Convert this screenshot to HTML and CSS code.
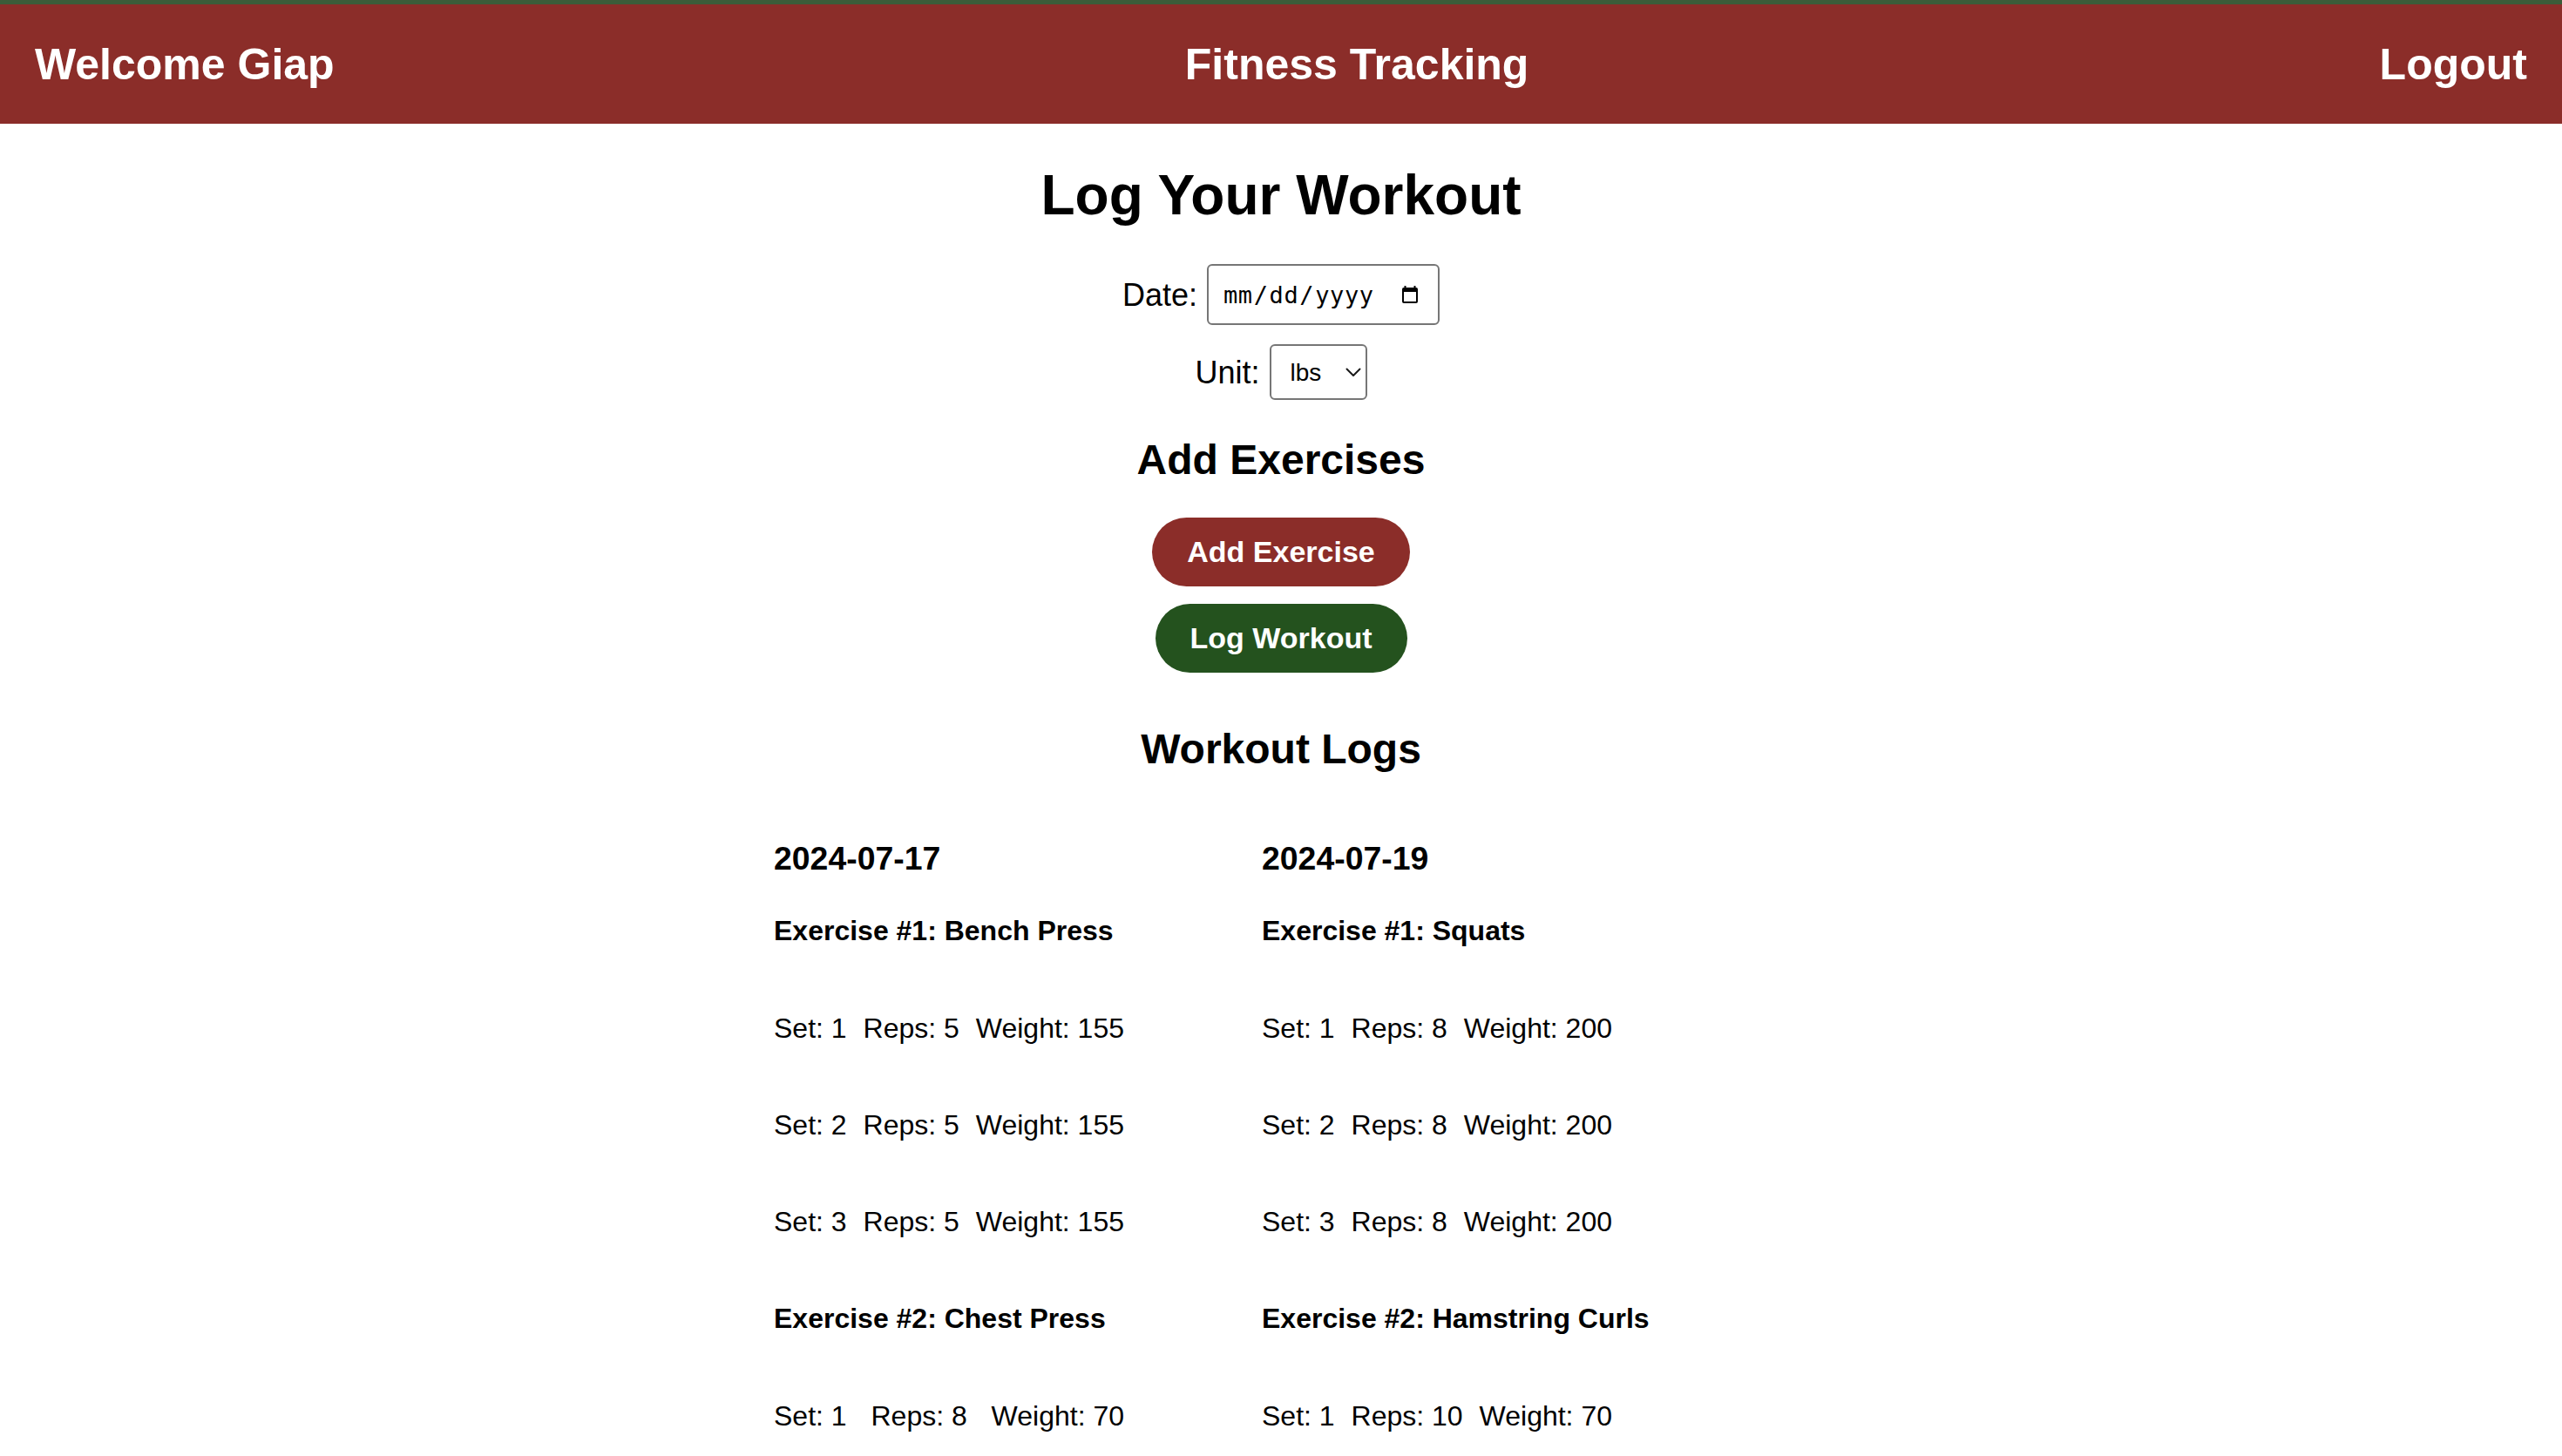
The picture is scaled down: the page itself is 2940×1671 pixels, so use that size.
FILE: index.html
```html
<!DOCTYPE html>
<html lang="en">
<head>
<meta charset="utf-8">
<title>Fitness Tracking</title>
<link rel="stylesheet" href="styles.css">
</head>
<body>
<header class="topbar">
  <span class="topbar-item">Welcome Giap</span>
  <span class="topbar-item">Fitness Tracking</span>
  <a class="topbar-item topbar-link" href="#">Logout</a>
</header>
<main class="page">
  <h1 class="title">Log Your Workout</h1>
  <div class="field field-date">
    <label class="field-label" for="date">Date:</label>
    <div class="date-wrap">
      <input class="date-input" type="date" id="date">
      <svg class="date-icon" width="20" height="20" viewBox="0 0 20 20" aria-hidden="true">
        <rect x="3.5" y="0" width="2" height="4" fill="#000"/>
        <rect x="14.5" y="0" width="2" height="4" fill="#000"/>
        <rect x="2" y="3" width="16" height="16" rx="1" fill="none" stroke="#000" stroke-width="2"/>
        <rect x="2" y="3" width="16" height="4" fill="#000"/>
      </svg>
    </div>
  </div>
  <div class="field field-unit">
    <label class="field-label" for="unit">Unit:</label>
    <div class="select-wrap">
      <select class="unit-select" id="unit">
        <option>lbs</option>
        <option>kg</option>
      </select>
      <svg class="select-chevron" width="18" height="11" viewBox="0 0 18 11" aria-hidden="true">
        <path d="M1.5 1.5 L9 9 L16.5 1.5" fill="none" stroke="#1a1a1a" stroke-width="2" stroke-linecap="round" stroke-linejoin="round"/>
      </svg>
    </div>
  </div>
  <h2 class="section-title section-add">Add Exercises</h2>
  <button class="btn btn-red" type="button">Add Exercise</button>
  <button class="btn btn-green" type="button">Log Workout</button>
  <h2 class="section-title section-logs">Workout Logs</h2>
  <div class="logs">
    <section class="log">
      <h3 class="log-date">2024-07-17</h3>
      <h4 class="ex-title">Exercise #1: Bench Press</h4>
      <div class="set-row"><span>Set: 1</span><span>Reps: 5</span><span>Weight: 155</span></div>
      <div class="set-row"><span>Set: 2</span><span>Reps: 5</span><span>Weight: 155</span></div>
      <div class="set-row"><span>Set: 3</span><span>Reps: 5</span><span>Weight: 155</span></div>
      <h4 class="ex-title ex-next">Exercise #2: Chest Press</h4>
      <div class="set-row"><span>Set: 1</span><span>Reps: 8</span><span>Weight: 70</span></div>
    </section>
    <section class="log">
      <h3 class="log-date">2024-07-19</h3>
      <h4 class="ex-title">Exercise #1: Squats</h4>
      <div class="set-row"><span>Set: 1</span><span>Reps: 8</span><span>Weight: 200</span></div>
      <div class="set-row"><span>Set: 2</span><span>Reps: 8</span><span>Weight: 200</span></div>
      <div class="set-row"><span>Set: 3</span><span>Reps: 8</span><span>Weight: 200</span></div>
      <h4 class="ex-title ex-next">Exercise #2: Hamstring Curls</h4>
      <div class="set-row"><span>Set: 1</span><span>Reps: 10</span><span>Weight: 70</span></div>
    </section>
  </div>
</main>
</body>
</html>
```
FILE: styles.css
```css
html, body {
  margin: 0;
  padding: 0;
  background: #ffffff;
}

body {
  font-family: "Liberation Sans", Arial, Helvetica, sans-serif;
  color: #000000;
  overflow: hidden;
}

.topbar {
  display: flex;
  justify-content: space-between;
  align-items: center;
  height: 137px;
  padding: 0 40px;
  background: #8b2d29;
  border-top: 5px solid #3b5c39;
}

.topbar-item {
  color: #ffffff;
  font-size: 50px;
  font-weight: bold;
  text-decoration: none;
}

.page {
  display: flex;
  flex-direction: column;
  align-items: center;
}

.title {
  margin: 45px 0 0;
  font-size: 64px;
  line-height: 74px;
  font-weight: bold;
}

.field {
  display: flex;
  align-items: center;
  gap: 11px;
}

.field-date {
  margin-top: 42px;
}

.field-unit {
  margin-top: 22px;
}

.field-label {
  font-size: 36px;
  line-height: 41px;
}

.date-wrap {
  position: relative;
  display: flex;
}

.date-input {
  box-sizing: border-box;
  width: 267px;
  height: 70px;
  margin: 0;
  padding: 0 22px 0 16px;
  border: 2px solid #767676;
  border-radius: 6px;
  background: #ffffff;
  color: #000000;
  font-family: "DejaVu Sans Mono", "Liberation Mono", monospace;
  font-size: 27px;
  letter-spacing: 0.6px;
}

.date-input::-webkit-calendar-picker-indicator {
  width: 20px;
  height: 20px;
  padding: 0;
  margin: 0;
  opacity: 0;
}

.date-icon {
  position: absolute;
  right: 24px;
  top: 25px;
  pointer-events: none;
}

.select-wrap {
  position: relative;
  display: flex;
}

.unit-select {
  box-sizing: border-box;
  width: 112px;
  height: 64px;
  margin: 0;
  padding: 0 0 0 22px;
  border: 2px solid #767676;
  border-radius: 6px;
  background: #ffffff;
  color: #000000;
  font-family: "Liberation Sans", Arial, sans-serif;
  font-size: 28px;
  appearance: none;
  -webkit-appearance: none;
}

.select-chevron {
  position: absolute;
  right: 7px;
  top: 27px;
  pointer-events: none;
}

.section-title {
  margin: 0;
  font-size: 48px;
  line-height: 55px;
  font-weight: bold;
}

.section-add {
  margin-top: 41px;
}

.section-logs {
  margin-top: 60px;
}

.btn {
  box-sizing: border-box;
  height: 79px;
  padding: 0 40px;
  border: none;
  border-radius: 40px;
  color: #ffffff;
  font-family: "Liberation Sans", Arial, sans-serif;
  font-size: 34px;
  font-weight: bold;
  line-height: 79px;
  cursor: pointer;
}

.btn-red {
  margin-top: 39px;
  background: #8b2d29;
}

.btn-green {
  margin-top: 20px;
  background: #24521e;
}

.logs {
  display: flex;
  gap: 20px;
  width: 1168px;
  margin-top: 77px;
  margin-left: 4px;
}

.log {
  display: flex;
  flex-direction: column;
  width: 540px;
}

.log-date {
  margin: 0;
  font-size: 37.4px;
  line-height: 43px;
  font-weight: bold;
}

.ex-title {
  margin: 43px 0 0;
  font-size: 32px;
  line-height: 37px;
  font-weight: bold;
}

.ex-title.ex-next {
  margin-top: 74px;
}

.set-row {
  display: flex;
  justify-content: space-between;
  width: 402px;
  margin-top: 74px;
  font-size: 32px;
  line-height: 37px;
}

.ex-title + .set-row {
  margin-top: 75px;
}
```
